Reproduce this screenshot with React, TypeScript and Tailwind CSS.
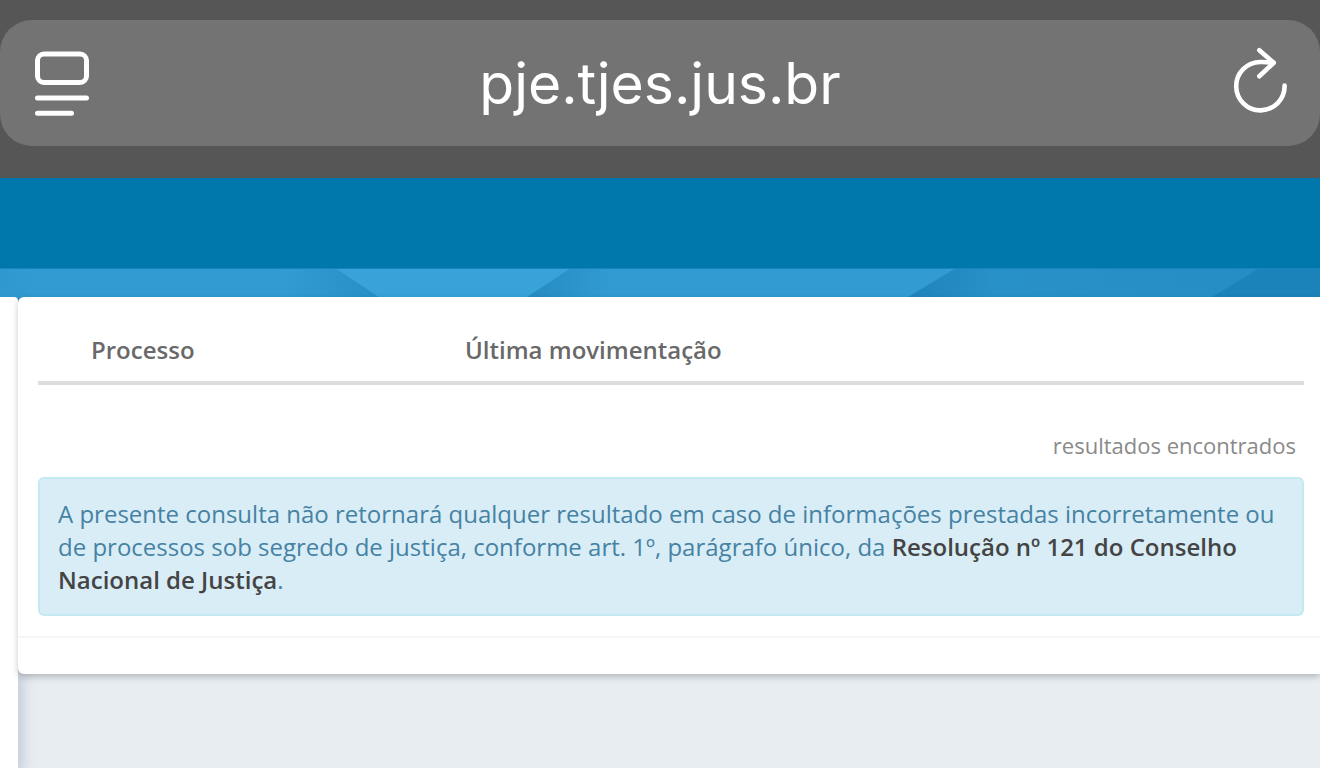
import React from "react";

function ReaderIcon() {
  return (
    <svg width="60" height="66" viewBox="-2 -1 60 66" fill="none" stroke="currentColor" strokeWidth="5" strokeLinecap="round" className="overflow-visible" aria-hidden="true">
      <rect x="3.5" y="3" width="49" height="28.5" rx="6.5" />
      <path d="M3.5 47H52.5M3.5 62.3H37.5" />
    </svg>
  );
}

function ReloadIcon() {
  return (
    <svg width="60" height="66" viewBox="-4 0 60 66" fill="none" stroke="currentColor" strokeWidth="4.6" strokeLinecap="round" strokeLinejoin="round" className="overflow-visible" aria-hidden="true">
      <path d="M52.6 35.5A24.2 24.2 0 1 1 28.3 12C32.5 11.9 36 12.2 41.5 12.8" />
      <path d="M27.3 0.3L41.7 12.8L27.3 26.2" />
    </svg>
  );
}

function BrowserBar() {
  return (
    <header className="bg-[#565656] pt-5 pb-8">
      <div className="flex items-center justify-between rounded-[32px] bg-[#737373] px-8 py-5 text-white">
        <button type="button" aria-label="Leitor" className="shrink-0">
          <ReaderIcon />
        </button>
        <input
          type="text"
          aria-label="Endereço"
          defaultValue="pje.tjes.jus.br"
          className="h-[86px] min-w-0 flex-1 bg-transparent text-center font-['Inter',sans-serif] text-[57px] outline-none"
        />
        <button type="button" aria-label="Recarregar" className="shrink-0">
          <ReloadIcon />
        </button>
      </div>
    </header>
  );
}

function Banner() {
  return (
    <svg className="block h-[29px] w-full" viewBox="0 0 1320 29" preserveAspectRatio="none" aria-hidden="true">
      <defs>
        <linearGradient id="left">
          <stop offset="0" stopColor="#2f98cf" />
          <stop offset="0.1" stopColor="#319bd2" />
          <stop offset="0.75" stopColor="#319bd2" />
          <stop offset="1" stopColor="#288fc5" />
        </linearGradient>
        <linearGradient id="middle">
          <stop offset="0" stopColor="#268bc1" />
          <stop offset="0.2" stopColor="#319bd2" />
          <stop offset="1" stopColor="#319bd2" />
        </linearGradient>
        <linearGradient id="right">
          <stop offset="0" stopColor="#1f83bb" />
          <stop offset="0.25" stopColor="#2891c7" />
          <stop offset="1" stopColor="#268dc4" />
        </linearGradient>
      </defs>
      <path d="M0 0H1320V29H0Z" fill="#319bd2" />
      <path d="M0 0H336L379 29H0Z" fill="url(#left)" />
      <path d="M335 0H572L527 29H379Z" fill="#38a2d9" />
      <path d="M571 0H957L908 29H527Z" fill="url(#middle)" />
      <path d="M956 0H1262L1214 29H908Z" fill="url(#right)" />
      <path d="M1260 0H1320V29H1212Z" fill="#1b82ba" />
      <path d="M0 0H1320V1H0Z" fill="#1784bb" />
    </svg>
  );
}

function Results() {
  return (
    <section className="rounded-l-md bg-white shadow-[0_3px_6px_rgba(0,0,0,0.22)]">
      <div className="border-b-2 border-[#f6f6f6] px-5 pt-[35px] pb-5 pr-4">
        <table className="w-full text-left text-2xl text-[#696969]">
          <thead>
            <tr className="border-b-4 border-[#dddddd]">
              <th scope="col" className="w-[374px] pb-[13px] pl-[53px] leading-9 font-semibold">Processo</th>
              <th scope="col" className="pb-[13px] pl-[53px] leading-9 font-semibold">Última movimentação</th>
            </tr>
          </thead>
        </table>
        <p className="pt-11 pr-2 pb-4 text-right text-[22px] leading-8 text-[#8a8a8a]">resultados encontrados</p>
        <div className="rounded-md border-2 border-[#c3e9f1] bg-[#d9edf7] px-[18px] py-[18px] text-2xl leading-[33px] text-[#4682a3]">
          A presente consulta não retornará qualquer resultado em caso de informações prestadas incorretamente ou
          de processos sob segredo de justiça, conforme art. 1º, parágrafo único, da{" "}
          <strong className="font-semibold text-[#444444]">Resolução nº 121 do Conselho Nacional de Justiça</strong>.
        </div>
      </div>
      <div className="h-9" />
    </section>
  );
}

export default function App() {
  return (
    <div className="flex min-h-screen flex-col bg-[#e8edf1] font-['Open_Sans',sans-serif]">
      <BrowserBar />
      <div className="h-[90px] bg-[#0078ac]" />
      <Banner />
      <div className="flex flex-1 bg-[linear-gradient(#319bd2_6px,#e8edf1_6px)]">
        <aside className="w-[18px] shrink-0 rounded-tr-sm bg-white shadow-[3px_8px_16px_rgba(80,100,150,0.3)]" />
        <main className="min-w-0 flex-1">
          <Results />
        </main>
      </div>
    </div>
  );
}
